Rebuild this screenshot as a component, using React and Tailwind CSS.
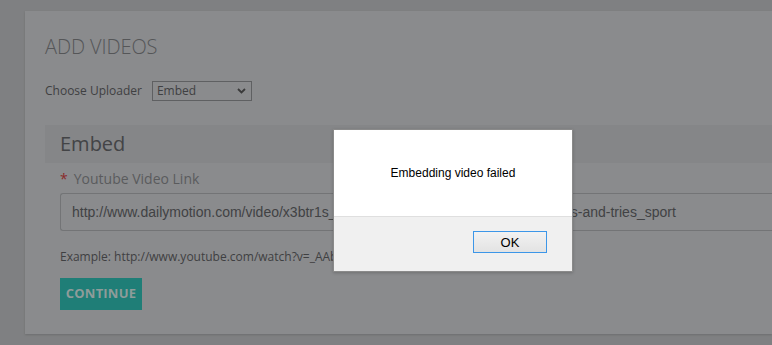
import React from "react";

function ChevronDown() {
  return (
    <svg width="9" height="6" viewBox="0 0 9 6" className="ml-auto">
      <path d="M1 1 L4.5 4.5 L8 1" fill="none" stroke="#3a3a3a" strokeWidth="1.8" />
    </svg>
  );
}

function AlertDialog() {
  return (
    <div className="absolute left-[333px] top-[129px] w-[240px] h-[143px] border border-[#8a8a8a] bg-white flex flex-col shadow-[0_1px_3px_rgba(0,0,0,0.2)] font-['Liberation_Sans',Arial,sans-serif]">
      <div className="h-[86px] flex items-center justify-center text-[12px] text-black">
        Embedding video failed
      </div>
      <div className="flex-1 bg-[#f0f0f0] border-t border-[#dfdfdf] flex justify-end items-start pt-[14px] pr-[25px]">
        <button className="w-[74px] h-[22px] border border-[#3c96e8] bg-gradient-to-b from-[#f2f2f2] to-[#e3e3e3] text-[13px] text-black leading-none">
          OK
        </button>
      </div>
    </div>
  );
}

export default function App() {
  return (
    <div className="relative w-[772px] h-[345px] overflow-hidden bg-[#7f8082] font-['Open_Sans',sans-serif]">
      <div className="ml-[25px] mt-[11px] h-[323px] bg-[#8a8b8d] pl-[20px] pt-[23px] shadow-[0_1px_2px_rgba(0,0,0,0.15)]">
        <h1 className="text-[20px] font-light text-[#555658] leading-[26px] tracking-[-0.1px]">ADD VIDEOS</h1>

        <div className="flex items-center mt-[21px] h-[20px]">
          <span className="text-[12px] text-[#3f4042]">Choose Uploader</span>
          <div className="ml-[10px] w-[100px] h-[20px] border border-[#5f6062] flex items-center pl-[4px] pr-[5px] text-[12px] text-[#3f4042]">
            Embed
            <ChevronDown />
          </div>
        </div>

        <div className="mt-[24px] h-[38px] bg-[#858688] flex items-center pl-[15px]">
          <span className="text-[20px] text-[#434446] leading-none">Embed</span>
        </div>

        <div className="pl-[15px]">
          <div className="mt-[6px] h-[18px] flex items-center text-[14px] text-[#5a5b5d]">
            <span className="text-[#8a2a2a] mr-[6px]">*</span>
            Youtube Video Link
          </div>
          <div className="mt-[6px] h-[38px] border border-[#737476] border-r-0 rounded-l-[3px] flex items-center pl-[11px] text-[14px] text-[#414244] font-['Liberation_Sans',Arial,sans-serif] whitespace-nowrap">
            http://www.dailymotion.com/video/x3btr1s_rugby-world-cup-2015-the-best-scrums-and-tries_sport
          </div>
          <div className="mt-[18px] text-[12px] text-[#3f4042] leading-[16px]">
            Example: http://www.youtube.com/watch?v=_AAbBcCdDeE
          </div>
          <button className="mt-[13px] w-[82px] h-[32px] bg-[#1f7e77] text-[13px] font-bold text-[#8e9c9a] tracking-[0.2px]">
            CONTINUE
          </button>
        </div>
      </div>
      <AlertDialog />
    </div>
  );
}
